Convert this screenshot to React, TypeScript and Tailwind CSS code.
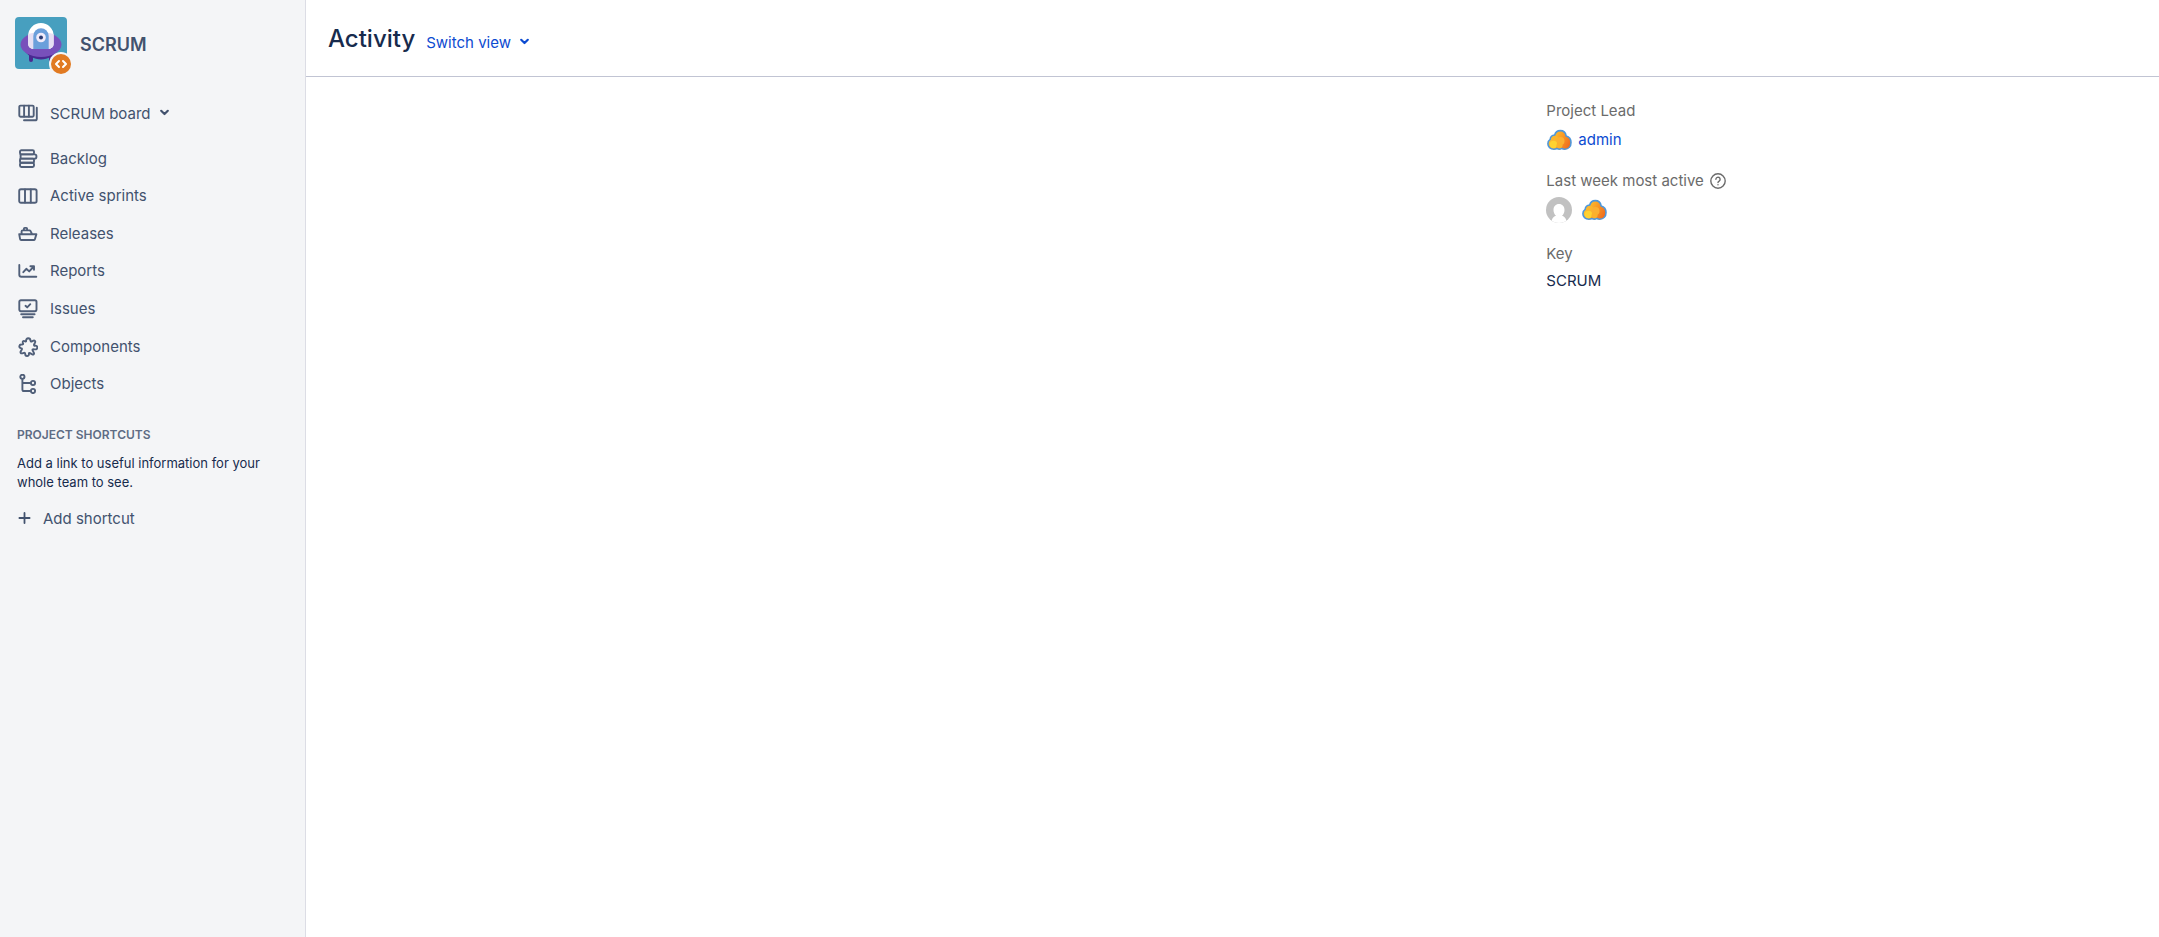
import type { ReactNode } from 'react';

interface NavItem {
  label: string;
  icon: ReactNode;
}

function Glyph({ children }: { children: ReactNode }) {
  return (
    <svg
      className="w-5 h-5 flex-shrink-0 text-[#505f79]"
      viewBox="0 0 20 20"
      fill="none"
      stroke="currentColor"
      strokeWidth={1.9}
      strokeLinecap="round"
      strokeLinejoin="round"
      aria-hidden="true"
    >
      {children}
    </svg>
  );
}

const boardIcon = (
  <Glyph>
    <rect x="1.3" y="1.6" width="14.4" height="11.2" rx="1.2" />
    <path d="M6.1 1.8v10.8M10.9 1.8v10.8M6 16.3h11.2c.9 0 1.6-.7 1.6-1.6V3.8" />
  </Glyph>
);

const navItems: NavItem[] = [
  {
    label: 'Backlog',
    icon: (
      <Glyph>
        <rect x="2" y="1.2" width="14" height="4.2" rx="1.4" />
        <path d="M2.6 5.4h14c.9 0 1.8.7 1.8 1.6v1c0 .9-.9 1.6-1.8 1.6h-14z" />
        <rect x="2" y="9.6" width="14" height="4.2" rx="1.2" />
        <rect x="2" y="13.8" width="14" height="4.2" rx="1.4" />
      </Glyph>
    ),
  },
  {
    label: 'Active sprints',
    icon: (
      <Glyph>
        <rect x="1.2" y="3.2" width="17.4" height="13.6" rx="1.8" />
        <path d="M7 3.4v13.2M12.8 3.4v13.2" />
      </Glyph>
    ),
  },
  {
    label: 'Releases',
    icon: (
      <Glyph>
        <path d="M1.2 10.2h17.2l-1.5 4.9c-.2.6-.6.9-1.2.9H3.2c-.6 0-1-.3-1.1-.9zM3.6 10V7.4c0-.6.4-1 1-1h6.9c.4 0 .7.2.9.5l1.6 3M5.9 6.2V4.7c0-.5.3-.8.8-.8h1.6c.5 0 .8.3.8.8v1.5" />
      </Glyph>
    ),
  },
  {
    label: 'Reports',
    icon: (
      <Glyph>
        <path d="M1.3 4v9.8c0 1.2.8 2 2 2h15M5.3 11.2l3-3.4 2.9 2.6 4.6-4.9M12.4 5.2h3.6v3.6" />
      </Glyph>
    ),
  },
  {
    label: 'Issues',
    icon: (
      <Glyph>
        <rect x="1.3" y="1.2" width="17.2" height="11" rx="1.6" />
        <path d="m7.5 6.8 1.7 1.6 3.1-3.2M3.2 15.2h13.4M5 18.2h9.8" />
      </Glyph>
    ),
  },
  {
    label: 'Components',
    icon: (
      <Glyph>
        <path d="M8.1 4.2C7.900 2.300 8.800 1.300 10.300 1.300c1.500 0 2.100 1.100 2.200 2.400.1.900.7 1.100 1.500.7l1.400-.7c1.200-.5 2.200.5 1.700 1.700l-1 2.100c-.4.900.2 1.300 1 1.200 1.300-.2 2.100.5 2.200 1.700.1 1.300-.9 2.100-2.200 2-1.700-.1-3.100-.4-2.500.9l1.300 2.600c.5 1.200-.5 2.100-1.600 1.500l-2.300-1.300c-.8-.4-1.200 0-1.100.8.2 1.300-.6 2.100-1.800 2.100s-1.900-.8-1.900-2c0-1-.5-1.400-1.300-1.200l-1.600.5c-1.300.4-2.200-.6-1.600-1.800l1.100-2c.4-.8 0-1.300-.8-1.400C1.800 10.900 1.100 10 1.400 8.900c.3-1.200 1.300-1.500 2.400-1.300 1 .1 1.500-.3 1.300-1.200l-.3-1c-.3-1.100.6-1.800 1.500-1.400.8.400 1.700.9 1.800.2z" />
      </Glyph>
    ),
  },
  {
    label: 'Objects',
    icon: (
      <Glyph>
        <circle cx="4.4" cy="2.8" r="2.1" />
        <circle cx="15" cy="9" r="2.1" />
        <circle cx="15" cy="17" r="2.1" />
        <path d="M4.4 5v10.4c0 1 .6 1.6 1.6 1.6h6.8M4.4 9h8.4" />
      </Glyph>
    ),
  },
];

function Chevron() {
  return (
    <svg
      className="w-3 h-3"
      viewBox="0 0 12 12"
      fill="none"
      stroke="currentColor"
      strokeWidth={2.2}
      strokeLinecap="round"
      strokeLinejoin="round"
      aria-hidden="true"
    >
      <path d="M2.2 2.8 5.5 6l3.3-3.2" />
    </svg>
  );
}

function ProjectAvatar() {
  return (
    <div className="relative w-[52px] h-[52px] flex-shrink-0">
      <svg className="w-full h-full rounded" viewBox="0 0 52 52" aria-hidden="true">
        <rect width="52" height="52" fill="#479fbf" />
        <path d="M14 37h4v6a2 2 0 0 1-4 0zM34 37h4v6a2 2 0 0 1-4 0z" fill="#4a2a91" />
        <path d="M9 33c4 6 10 9.5 17 9.5S39 39 43 33z" fill="#4a2a91" />
        <ellipse cx="26" cy="27.5" rx="20.5" ry="12.5" fill="#7850bb" />
        <path d="M13.2 18.5a12.7 12.5 0 0 1 25.4 0V27a5 5 0 0 1-5 5h-15.4a5 5 0 0 1-5-5z" fill="#fff" />
        <path d="M13.2 17c8-2.5 17-2.5 25.4 0v10a5 5 0 0 1-5 5h-15.4a5 5 0 0 1-5-5z" fill="#e6dff3" />
        <path d="M18.3 19a7.7 7.7 0 0 1 15.4 0v13H18.3z" fill="#6b9fdb" />
        <circle cx="26" cy="20.5" r="4.8" fill="#f1ebfa" />
        <circle cx="26" cy="20.5" r="2" fill="#2c3b73" />
      </svg>
      <svg className="absolute left-[34px] top-[35px] w-6 h-6" viewBox="0 0 24 24" aria-hidden="true">
        <circle cx="12" cy="12" r="12" fill="#f4f5f7" />
        <circle cx="12" cy="12" r="10" fill="#e17a22" />
        <path
          d="m10 9-3 3 3 3M14 9l3 3-3 3"
          fill="none"
          stroke="#fff"
          strokeWidth="2"
          strokeLinecap="round"
          strokeLinejoin="round"
        />
      </svg>
    </div>
  );
}

function CloudAvatar() {
  return (
    <svg className="w-[26px] h-[26px]" viewBox="0 0 26 26" aria-hidden="true">
      <defs>
        <linearGradient id="cloud-fill" x1="0" y1="0.3" x2="1" y2="0.7">
          <stop offset="0.1" stopColor="#fdc531" />
          <stop offset="0.5" stopColor="#fa9f26" />
          <stop offset="0.95" stopColor="#f0701f" />
        </linearGradient>
      </defs>
      <path
        d="M8.7 8C9.500 4.900 11.500 3.600 14.300 3.600c3.200 0 5.300 2 5.800 5.300 3 .8 4.900 3.300 4.900 6.500 0 4-2.500 6.800-6.200 6.800-1.300 0-2.300-.3-3-.9-1.500 1-3.300 1-4.700.2-1 .5-2 .7-3.200.7-3.600 0-6-2.200-6-5.400 0-2 .9-3.500 2.300-4.400C4.400 10 6.100 8.300 8.700 8z"
        fill="url(#cloud-fill)"
        stroke="#4f97da"
        strokeWidth="1.6"
        strokeLinejoin="round"
      />
      <circle cx="9" cy="12.5" r="3.6" fill="#fbb62f" />
      <circle cx="14.5" cy="14" r="4" fill="#fbb033" />
      <circle cx="7.5" cy="17.5" r="3.7" fill="#fed232" />
      <circle cx="13.5" cy="18.2" r="3" fill="#fbb12c" />
    </svg>
  );
}

function PersonAvatar() {
  return (
    <svg className="w-[26px] h-[26px] rounded-full" viewBox="0 0 26 26" aria-hidden="true">
      <rect width="26" height="26" fill="#c1c1c1" />
      <path
        d="M13 7c3.3 0 5.5 2.5 5.5 6 0 2.4-1 4.5-2.5 5.7 2.5.8 4.5 3 5 7.3H5c.5-4.3 2.5-6.5 5-7.3-1.5-1.2-2.5-3.3-2.5-5.7 0-3.5 2.2-6 5.5-6z"
        fill="#fff"
      />
    </svg>
  );
}

function Sidebar() {
  return (
    <aside className="w-[306px] flex-shrink-0 bg-[#f4f5f7] border-r border-[#dcdde5] text-[#42526e]">
      <div className="flex items-center gap-[13px] pl-[15px] pt-[17px]">
        <ProjectAvatar />
        <span className="pt-1 text-lg font-semibold">SCRUM</span>
      </div>

      <button type="button" className="flex items-center h-10 mt-[25px] pl-[18px]">
        {boardIcon}
        <span className="ml-3 mr-2">SCRUM board</span>
        <Chevron />
      </button>

      <nav>
        <ul className="grid auto-rows-fr h-[263px] mt-[6px]">
          {navItems.map(item => (
            <li key={item.label}>
              <a href="#" className="flex items-center gap-3 h-full pl-[18px]">
                {item.icon}
                {item.label}
              </a>
            </li>
          ))}
        </ul>
      </nav>

      <section className="px-[17px] mt-6">
        <h2 className="text-xs leading-4 font-semibold text-[#5e6c84]">PROJECT SHORTCUTS</h2>
        <p className="mt-[11px] text-[13px] leading-[19px] text-[#172b4d]">
          Add a link to useful information for your whole team to see.
        </p>
        <button type="button" className="flex items-center gap-3 mt-[17px]">
          <svg
            className="w-[14px] h-[14px]"
            viewBox="0 0 14 14"
            fill="none"
            stroke="currentColor"
            strokeWidth={1.8}
            strokeLinecap="round"
            aria-hidden="true"
          >
            <path d="M7.5.9v10.200M2.400 6h10.200" />
          </svg>
          Add shortcut
        </button>
      </section>
    </aside>
  );
}

function ProjectDetails() {
  return (
    <dl className="w-1/3 ml-auto pl-[5px] pt-[23px] leading-[22px] text-[#6b6b6b]">
      <dt>Project Lead</dt>
      <dd className="flex items-center gap-[6px] mt-[5px]">
        <CloudAvatar />
        <a href="#" className="text-[#0c4bd1]">admin</a>
      </dd>

      <dt className="flex items-center gap-[6px] mt-[17px]">
        Last week most active
        <svg
          className="w-4 h-4"
          viewBox="0 0 16 16"
          fill="none"
          stroke="currentColor"
          strokeWidth={1.4}
          strokeLinecap="round"
          aria-hidden="true"
        >
          <circle cx="8" cy="8" r="7.2" />
          <path d="M5.9 6.3a2.1 2.1 0 1 1 3.2 1.8c-.7.4-1.1.8-1.1 1.5M8 11.7v.1" />
        </svg>
      </dt>
      <dd className="flex items-center gap-[9px] mt-[5px]">
        <PersonAvatar />
        <CloudAvatar />
      </dd>

      <dt className="mt-5">Key</dt>
      <dd className="mt-[5px] text-[#172b4d]">SCRUM</dd>
    </dl>
  );
}

export default function App() {
  return (
    <div className="flex min-h-screen bg-white font-['Inter',sans-serif] text-[15px] leading-5">
      <Sidebar />
      <main className="flex-1">
        <header className="flex items-start gap-[11px] h-[77px] pt-[23px] pl-[22px] border-b border-[#c1c4d3]">
          <h1 className="text-2xl font-medium text-[#172b4d]">Activity</h1>
          <button type="button" className="flex items-center gap-2 pt-[10px] text-[#0c4bd1]">
            Switch view
            <Chevron />
          </button>
        </header>
        <ProjectDetails />
      </main>
    </div>
  );
}
